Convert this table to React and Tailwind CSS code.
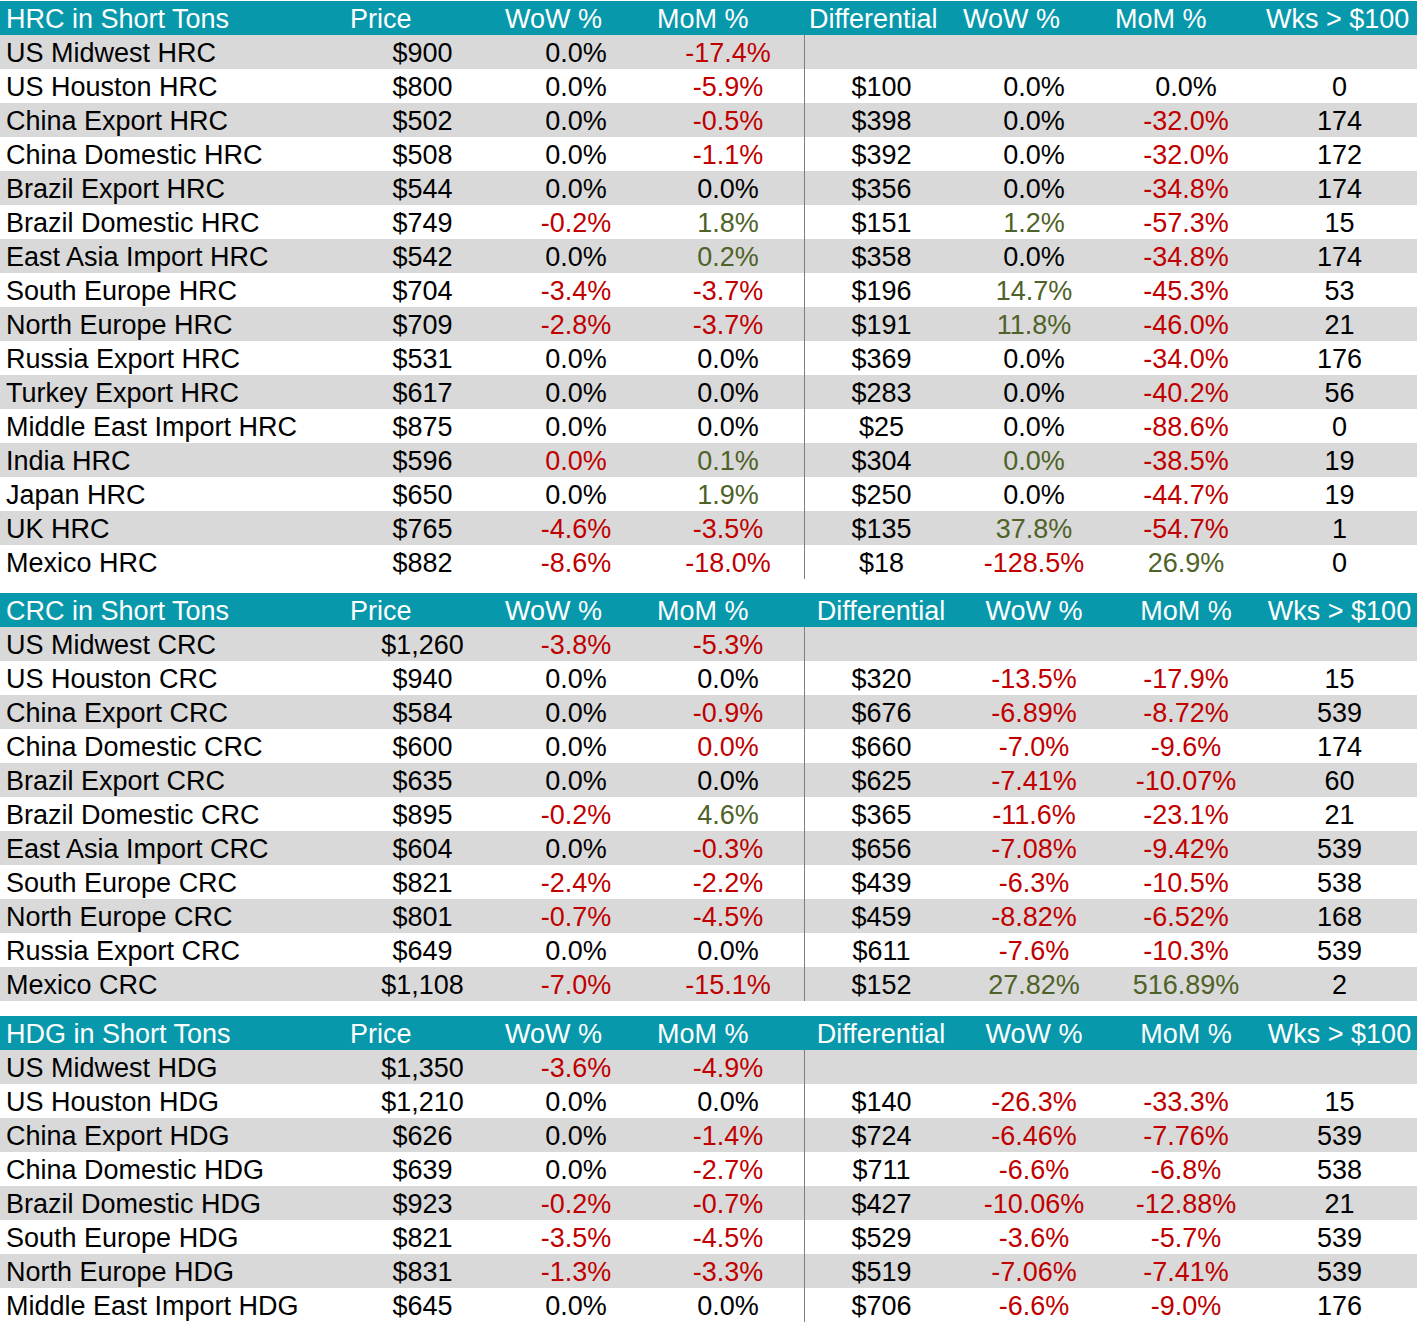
import React from 'react';

const COLS = ['w-[345px]', 'w-[155px]', 'w-[152px]', 'w-[152px]', 'w-[154px]', 'w-[152px]', 'w-[152px]', 'w-[155px]'];

const color = (c) => (c === 'r' ? 'text-[#c00000]' : c === 'g' ? 'text-[#4f6228]' : 'text-black');

// cell: "text" or ["text", "r"|"g"]
const hrc = [
  ['US Midwest HRC', '$900', '0.0%', ['-17.4%', 'r']],
  ['US Houston HRC', '$800', '0.0%', ['-5.9%', 'r'], '$100', '0.0%', '0.0%', '0'],
  ['China Export HRC', '$502', '0.0%', ['-0.5%', 'r'], '$398', '0.0%', ['-32.0%', 'r'], '174'],
  ['China Domestic HRC', '$508', '0.0%', ['-1.1%', 'r'], '$392', '0.0%', ['-32.0%', 'r'], '172'],
  ['Brazil Export HRC', '$544', '0.0%', '0.0%', '$356', '0.0%', ['-34.8%', 'r'], '174'],
  ['Brazil Domestic HRC', '$749', ['-0.2%', 'r'], ['1.8%', 'g'], '$151', ['1.2%', 'g'], ['-57.3%', 'r'], '15'],
  ['East Asia Import HRC', '$542', '0.0%', ['0.2%', 'g'], '$358', '0.0%', ['-34.8%', 'r'], '174'],
  ['South Europe HRC', '$704', ['-3.4%', 'r'], ['-3.7%', 'r'], '$196', ['14.7%', 'g'], ['-45.3%', 'r'], '53'],
  ['North Europe HRC', '$709', ['-2.8%', 'r'], ['-3.7%', 'r'], '$191', ['11.8%', 'g'], ['-46.0%', 'r'], '21'],
  ['Russia Export HRC', '$531', '0.0%', '0.0%', '$369', '0.0%', ['-34.0%', 'r'], '176'],
  ['Turkey Export HRC', '$617', '0.0%', '0.0%', '$283', '0.0%', ['-40.2%', 'r'], '56'],
  ['Middle East Import HRC', '$875', '0.0%', '0.0%', '$25', '0.0%', ['-88.6%', 'r'], '0'],
  ['India HRC', '$596', ['0.0%', 'r'], ['0.1%', 'g'], '$304', ['0.0%', 'g'], ['-38.5%', 'r'], '19'],
  ['Japan HRC', '$650', '0.0%', ['1.9%', 'g'], '$250', '0.0%', ['-44.7%', 'r'], '19'],
  ['UK HRC', '$765', ['-4.6%', 'r'], ['-3.5%', 'r'], '$135', ['37.8%', 'g'], ['-54.7%', 'r'], '1'],
  ['Mexico HRC', '$882', ['-8.6%', 'r'], ['-18.0%', 'r'], '$18', ['-128.5%', 'r'], ['26.9%', 'g'], '0'],
];

const crc = [
  ['US Midwest CRC', '$1,260', ['-3.8%', 'r'], ['-5.3%', 'r']],
  ['US Houston CRC', '$940', '0.0%', '0.0%', '$320', ['-13.5%', 'r'], ['-17.9%', 'r'], '15'],
  ['China Export CRC', '$584', '0.0%', ['-0.9%', 'r'], '$676', ['-6.89%', 'r'], ['-8.72%', 'r'], '539'],
  ['China Domestic CRC', '$600', '0.0%', ['0.0%', 'r'], '$660', ['-7.0%', 'r'], ['-9.6%', 'r'], '174'],
  ['Brazil Export CRC', '$635', '0.0%', '0.0%', '$625', ['-7.41%', 'r'], ['-10.07%', 'r'], '60'],
  ['Brazil Domestic CRC', '$895', ['-0.2%', 'r'], ['4.6%', 'g'], '$365', ['-11.6%', 'r'], ['-23.1%', 'r'], '21'],
  ['East Asia Import CRC', '$604', '0.0%', ['-0.3%', 'r'], '$656', ['-7.08%', 'r'], ['-9.42%', 'r'], '539'],
  ['South Europe CRC', '$821', ['-2.4%', 'r'], ['-2.2%', 'r'], '$439', ['-6.3%', 'r'], ['-10.5%', 'r'], '538'],
  ['North Europe CRC', '$801', ['-0.7%', 'r'], ['-4.5%', 'r'], '$459', ['-8.82%', 'r'], ['-6.52%', 'r'], '168'],
  ['Russia Export CRC', '$649', '0.0%', '0.0%', '$611', ['-7.6%', 'r'], ['-10.3%', 'r'], '539'],
  ['Mexico CRC', '$1,108', ['-7.0%', 'r'], ['-15.1%', 'r'], '$152', ['27.82%', 'g'], ['516.89%', 'g'], '2'],
];

const hdg = [
  ['US Midwest HDG', '$1,350', ['-3.6%', 'r'], ['-4.9%', 'r']],
  ['US Houston HDG', '$1,210', '0.0%', '0.0%', '$140', ['-26.3%', 'r'], ['-33.3%', 'r'], '15'],
  ['China Export HDG', '$626', '0.0%', ['-1.4%', 'r'], '$724', ['-6.46%', 'r'], ['-7.76%', 'r'], '539'],
  ['China Domestic HDG', '$639', '0.0%', ['-2.7%', 'r'], '$711', ['-6.6%', 'r'], ['-6.8%', 'r'], '538'],
  ['Brazil Domestic HDG', '$923', ['-0.2%', 'r'], ['-0.7%', 'r'], '$427', ['-10.06%', 'r'], ['-12.88%', 'r'], '21'],
  ['South Europe HDG', '$821', ['-3.5%', 'r'], ['-4.5%', 'r'], '$529', ['-3.6%', 'r'], ['-5.7%', 'r'], '539'],
  ['North Europe HDG', '$831', ['-1.3%', 'r'], ['-3.3%', 'r'], '$519', ['-7.06%', 'r'], ['-7.41%', 'r'], '539'],
  ['Middle East Import HDG', '$645', '0.0%', '0.0%', '$706', ['-6.6%', 'r'], ['-9.0%', 'r'], '176'],
];

const HeaderRow = ({ title, centered }) => {
  const labels = [title, 'Price', 'WoW %', 'MoM %', 'Differential', 'WoW %', 'MoM %', 'Wks > $100'];
  return (
    <div className="flex h-[34px] bg-[#0898ab] text-white leading-[36px]">
      {labels.map((l, i) => (
        <div
          key={i}
          className={`${COLS[i]} shrink-0 whitespace-nowrap ${
            i === 0 ? 'pl-[6px]' : centered && i >= 4 ? 'text-center' : i === 7 ? 'pl-[4px]' : 'pl-[5px]'
          }`}
        >
          {l}
        </div>
      ))}
    </div>
  );
};

const DataRow = ({ row, gray }) => {
  const cells = [...row];
  while (cells.length < 8) cells.push('');
  return (
    <div className={`flex h-[34px] leading-[37px] ${gray ? 'bg-[#d9d9d9]' : 'bg-white'}`}>
      {cells.map((c, i) => {
        const text = Array.isArray(c) ? c[0] : c;
        const col = Array.isArray(c) ? c[1] : null;
        return (
          <div
            key={i}
            className={`${COLS[i]} shrink-0 whitespace-nowrap ${color(col)} ${
              i === 0 ? 'pl-[6px]' : 'text-center'
            } ${i === 4 ? 'border-l border-[#7f7f7f]' : ''}`}
          >
            {text}
          </div>
        );
      })}
    </div>
  );
};

const Table = ({ title, rows, centered }) => (
  <div>
    <HeaderRow title={title} centered={centered} />
    {rows.map((r, i) => (
      <DataRow key={i} row={r} gray={i % 2 === 0} />
    ))}
  </div>
);

export default function App() {
  return (
    <div className="w-[1417px] bg-white pt-px font-['Liberation_Sans',Arial,sans-serif] text-[27px]">
      <Table title="HRC in Short Tons" rows={hrc} />
      <div className="h-[14px]" />
      <Table title="CRC in Short Tons" rows={crc} centered />
      <div className="h-[15px]" />
      <Table title="HDG in Short Tons" rows={hdg} centered />
    </div>
  );
}
